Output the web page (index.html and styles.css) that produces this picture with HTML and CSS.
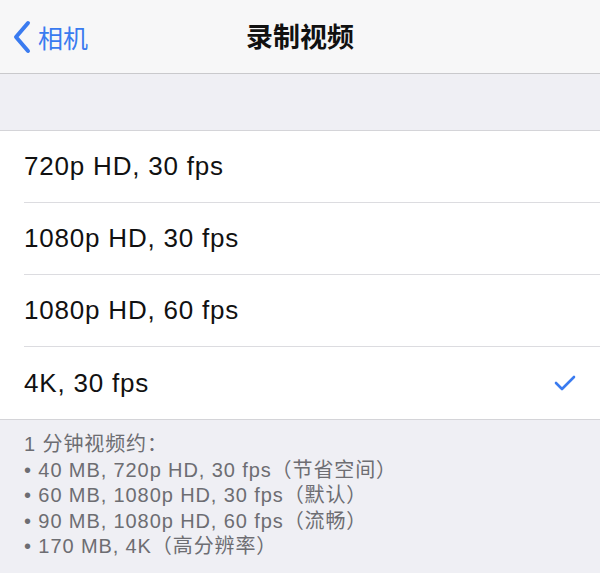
FILE: index.html
```html
<!DOCTYPE html>
<html lang="zh">

<head>
    <meta charset="UTF-8" />
    <meta name="viewport" content="width=device-width, initial-scale=1.0" />
    <title>录制视频</title>
    <link rel="stylesheet" href="styles.css">
</head>

<body>

    <!-- 顶部导航 -->
    <div class="nav-bar">
        <div class="back">
            <svg class="chevron" width="18" height="34" viewBox="0 0 18 34">
                <path d="M15 3 L3 17 L15 31" fill="none" stroke="#3a7bf0" stroke-width="4" stroke-linecap="round" stroke-linejoin="round" />
            </svg>
            <span>相机</span>
        </div>
        <div class="title">录制视频</div>
    </div>

    <div class="spacer"></div>

    <!-- 选项列表 -->
    <ul class="options">
        <li><span>720p HD, 30 fps</span></li>
        <li><span>1080p HD, 30 fps</span></li>
        <li><span>1080p HD, 60 fps</span></li>
        <li>
            <span>4K, 30 fps</span>
            <svg class="check" width="22" height="18" viewBox="0 0 22 18">
                <path d="M2 9 L8 15 L20 3" fill="none" stroke="#3a7bf0" stroke-width="2.6" stroke-linecap="round" stroke-linejoin="round" />
            </svg>
        </li>
    </ul>

    <!-- 说明 -->
    <div class="footer">
        <p>1 分钟视频约：</p>
        <p>• 40 MB, 720p HD, 30 fps（节省空间）</p>
        <p>• 60 MB, 1080p HD, 30 fps（默认）</p>
        <p>• 90 MB, 1080p HD, 60 fps（流畅）</p>
        <p>• 170 MB, 4K（高分辨率）</p>
    </div>

</body>

</html>
```

FILE: styles.css
```css
body {
    margin: 0;
    padding: 0;
    background-color: #efeff4;
    font-family: "Liberation Sans", "Noto Sans CJK SC", sans-serif;
    color: #111;
}

.nav-bar {
    position: relative;
    height: 73px;
    background-color: #f7f7f8;
    border-bottom: 1px solid #c9c9cc;
    display: flex;
    align-items: center;
    justify-content: center;
}

.back {
    position: absolute;
    left: 13px;
    top: 0;
    height: 73px;
    display: flex;
    align-items: center;
    gap: 7px;
    color: #3a7bf0;
    font-size: 25px;
}

.title {
    font-size: 27px;
    font-weight: bold;
    margin-top: -2px;
}

.spacer {
    height: 56px;
    border-bottom: 1px solid #d4d4d8;
}

.options {
    list-style: none;
    margin: 0;
    padding: 0 0 0 24px;
    background-color: #fff;
    border-bottom: 1px solid #d4d4d8;
}

.options li {
    height: 71px;
    display: flex;
    align-items: center;
    justify-content: space-between;
    padding-right: 24px;
    font-size: 26px;
    letter-spacing: 0.8px;
    border-bottom: 1px solid #dcdce0;
}

.options li:last-child {
    border-bottom: none;
    height: 72px;
}

.footer {
    padding: 12px 24px 0;
    color: #6d6d72;
    font-size: 20px;
    letter-spacing: 0.9px;
}

.footer p {
    margin: 0;
    line-height: 25.5px;
}
```
